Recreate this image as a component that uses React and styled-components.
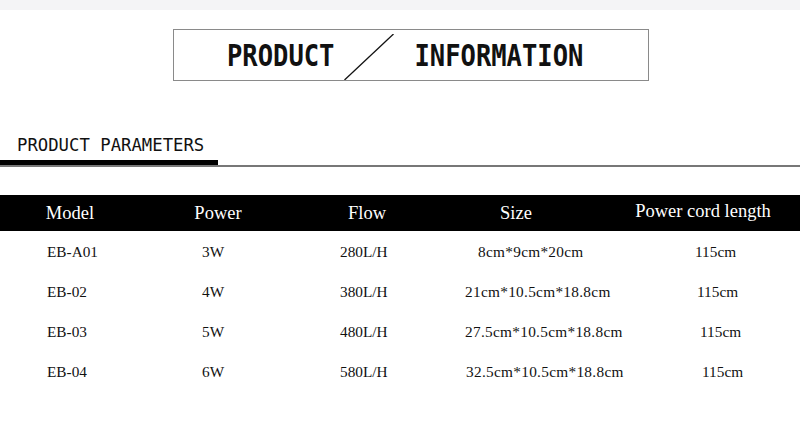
import React from "react";
import styled, { createGlobalStyle } from "styled-components";

const GlobalStyle = createGlobalStyle`
  html, body {
    margin: 0;
    padding: 0;
    background: #fff;
  }
  body {
    width: 800px;
    height: 441px;
    overflow: hidden;
  }
`;

const Page = styled.div`
  width: 800px;
  height: 441px;
  background: #fff;
  overflow: hidden;
`;

const TopBand = styled.div`
  height: 10px;
  background: #f4f4f6;
`;

const TitleBox = styled.div`
  box-sizing: border-box;
  display: flex;
  align-items: center;
  width: 476px;
  height: 52px;
  margin: 19px 0 0 173px;
  padding-left: 53px;
  border: 1px solid #8a8a8a;
`;

const BoxWord = styled.span`
  font-family: "DejaVu Sans Mono", "Liberation Mono", monospace;
  font-weight: bold;
  font-size: 25.5px;
  line-height: 30px;
  color: #111;
  transform: scaleY(1.18);
  margin-left: ${(p) => p.$gap || 0}px;
`;

const Slash = styled.svg`
  align-self: flex-end;
  margin-left: 10px;
  display: block;
`;

const SectionHead = styled.div`
  margin-top: 54px;
  border-bottom: 2px solid #777;
`;

const SectionTitle = styled.div`
  box-sizing: border-box;
  width: 218px;
  padding: 0 0 5px 17px;
  border-bottom: 5px solid #000;
  font-family: "DejaVu Sans Mono", "Liberation Mono", monospace;
  font-size: 17.3px;
  line-height: 20px;
  color: #111;
`;

const Table = styled.div`
  margin-top: 28px;
`;

const cols = "140px 156px 142px 156px 206px";

const HeadRow = styled.div`
  display: grid;
  grid-template-columns: ${cols};
  height: 36px;
  align-items: center;
  background: #000;
`;

const HeadCell = styled.div`
  text-align: center;
  padding-left: ${(p) => p.$shift || 0}px;
  margin-top: ${(p) => p.$lift || 0}px;
  font-family: "Liberation Serif", "Times New Roman", serif;
  font-size: 18.5px;
  color: #fff;
`;

const Row = styled.div`
  display: grid;
  grid-template-columns: ${cols};
  height: 40px;
  align-items: center;
`;

const Cell = styled.div`
  padding-left: ${(p) => p.$left}px;
  padding-top: 1px;
  font-family: "Liberation Serif", "Times New Roman", serif;
  font-size: 15.3px;
  letter-spacing: ${(p) => p.$spread || 0}px;
  color: #111;
  white-space: nowrap;
`;

const headers = [
  { label: "Model" },
  { label: "Power" },
  { label: "Flow" },
  { label: "Size" },
  { label: "Power cord length", shift: 12, lift: -3 },
];

const rows = [
  { model: "EB-A01", power: "3W", flow: "280L/H", size: "8cm*9cm*20cm", sizeShift: 13, cord: "115cm", cordShift: 0 },
  { model: "EB-02", power: "4W", flow: "380L/H", size: "21cm*10.5cm*18.8cm", sizeShift: 0, cord: "115cm", cordShift: 2 },
  { model: "EB-03", power: "5W", flow: "480L/H", size: "27.5cm*10.5cm*18.8cm", sizeShift: 0, cord: "115cm", cordShift: 5 },
  { model: "EB-04", power: "6W", flow: "580L/H", size: "32.5cm*10.5cm*18.8cm", sizeShift: 1, cord: "115cm", cordShift: 7 },
];

export default function App() {
  return (
    <Page>
      <GlobalStyle />
      <TopBand />
      <TitleBox>
        <BoxWord>PRODUCT</BoxWord>
        <Slash width="50" height="46" viewBox="0 0 50 46">
          <line x1="0.5" y1="46" x2="49.5" y2="0" stroke="#111" strokeWidth="1.3" />
        </Slash>
        <BoxWord $gap={20}>INFORMATION</BoxWord>
      </TitleBox>

      <SectionHead>
        <SectionTitle>PRODUCT PARAMETERS</SectionTitle>
      </SectionHead>

      <Table>
        <HeadRow>
          {headers.map((h) => (
            <HeadCell key={h.label} $shift={h.shift} $lift={h.lift}>
              {h.label}
            </HeadCell>
          ))}
        </HeadRow>
        {rows.map((r) => (
          <Row key={r.model}>
            <Cell $left={47}>{r.model}</Cell>
            <Cell $left={62}>{r.power}</Cell>
            <Cell $left={44}>{r.flow}</Cell>
            <Cell $left={27 + r.sizeShift} $spread={0.3}>{r.size}</Cell>
            <Cell $left={101 + r.cordShift}>{r.cord}</Cell>
          </Row>
        ))}
      </Table>
    </Page>
  );
}
